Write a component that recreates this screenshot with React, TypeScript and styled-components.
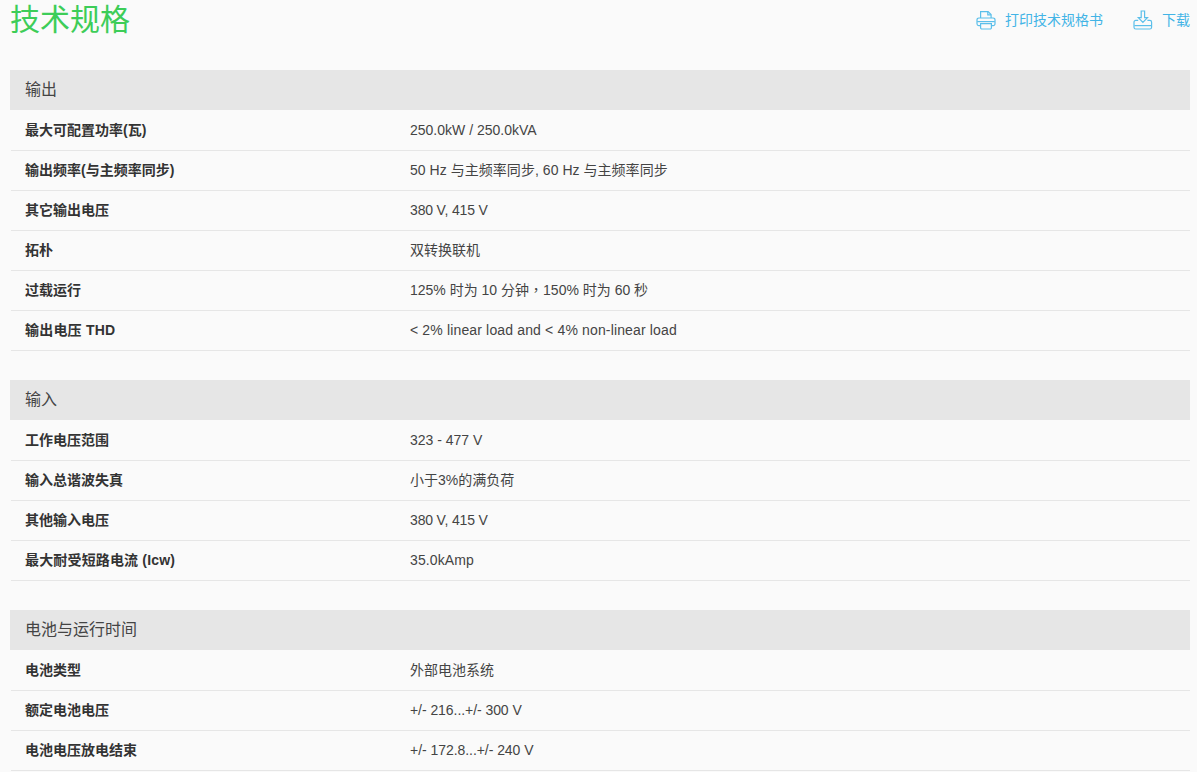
import React from "react";
import styled, { createGlobalStyle } from "styled-components";

const FONT = `"Liberation Sans", "Noto Sans CJK SC", Arial, sans-serif`;

const Global = createGlobalStyle`
  html, body { margin: 0; padding: 0; background: #fafafa; }
  body { font-family: ${FONT}; color: #333; overflow: hidden; }
`;

const Page = styled.div`
  width: 1197px;
  height: 772px;
  box-sizing: border-box;
  padding: 0 7px 0 10px;
  overflow: hidden;
`;

const Top = styled.header`
  display: flex;
  justify-content: space-between;
  align-items: flex-start;
  height: 70px;
`;

const Title = styled.h1`
  margin: 0;
  font-size: 30px;
  font-weight: 400;
  line-height: 40px;
  color: #3dcd58;
`;

const Actions = styled.div`
  display: flex;
  align-items: center;
  height: 40px;
  gap: 30px;
`;

const Action = styled.a`
  display: flex;
  align-items: center;
  gap: 9px;
  font-size: 14px;
  line-height: 20px;
  color: #42b4e6;
`;

const Section = styled.section`
  margin-bottom: 29px;
`;

const SectionHead = styled.h2`
  margin: 0;
  height: 40px;
  padding: 0 15px;
  background: #e6e6e6;
  font-size: 16px;
  font-weight: 400;
  line-height: 40px;
  color: #444;
`;

const Rows = styled.div`
  padding: 1px 0 0 1px;
`;

const Row = styled.div`
  display: grid;
  grid-template-columns: 385px 1fr;
  height: 40px;
  box-sizing: border-box;
  padding-left: 14px;
  border-bottom: 1px solid #e6e6e6;
  font-size: 14px;
  line-height: 38px;
`;

const Label = styled.div<{ $spacing?: number }>`
  font-weight: 700;
  color: #333;
  letter-spacing: ${(p) => p.$spacing ?? 0}px;
`;

const Value = styled.div<{ $spacing?: number }>`
  color: #444;
  letter-spacing: ${(p) => p.$spacing ?? 0}px;
`;

const CenteredComma = styled.span`
  font-family: "Noto Sans CJK TC", sans-serif;
  line-height: 0;
`;

const Svg = styled.svg`
  display: block;
  fill: none;
  stroke: #5bbfea;
  stroke-width: 1.2;
`;

const PrintIcon = () => (
  <Svg width="20" height="20" viewBox="0 0 20 20">
    <path d="M4.600 8V1.600h7.500l3 3V8" />
    <path d="M11.800 1.800v3h3.200" />
    <path d="M4.400 15.600H2.800a1.800 1.800 0 0 1-1.800-1.800V9.800A1.800 1.800 0 0 1 2.800 8h14.400a1.800 1.800 0 0 1 1.800 1.800v4a1.800 1.800 0 0 1-1.800 1.800h-1.600" />
    <path d="M1.200 11.600h17.600" />
    <path d="M4.600 13.600h10.800v4.200a1.200 1.200 0 0 1-1.200 1.200H5.800a1.200 1.200 0 0 1-1.200-1.200z" />
  </Svg>
);

const DownloadIcon = () => (
  <Svg width="20" height="20" viewBox="0 0 20 20">
    <path d="M8.200 1h3.400v6.600h2.900L9.900 12.400 5.300 7.600h2.900z" />
    <path d="M5.200 10.400H2.800A1.800 1.800 0 0 0 1 12.200v5A1.800 1.800 0 0 0 2.800 19h14a1.800 1.800 0 0 0 1.800-1.800v-5a1.800 1.800 0 0 0-1.800-1.800h-2.400" />
    <path d="M1.400 15.600h16.800" />
  </Svg>
);

type Spec = { k: string; v: React.ReactNode; ks?: number; vs?: number };

const sections: { title: string; rows: Spec[] }[] = [
  {
    title: "输出",
    rows: [
      { k: "最大可配置功率(瓦)", v: "250.0kW / 250.0kVA" },
      { k: "输出频率(与主频率同步)", v: "50 Hz 与主频率同步, 60 Hz 与主频率同步", vs: 0.04 },
      { k: "其它输出电压", v: "380 V, 415 V", vs: -0.16 },
      { k: "拓朴", v: "双转换联机" },
      { k: "过载运行", v: <>125% 时为 10 分钟<CenteredComma>，</CenteredComma>150% 时为 60 秒</> },
      { k: "输出电压 THD", v: "< 2% linear load and < 4% non-linear load", ks: 0.2, vs: 0.15 },
    ],
  },
  {
    title: "输入",
    rows: [
      { k: "工作电压范围", v: "323 - 477 V" },
      { k: "输入总谐波失真", v: "小于3%的满负荷" },
      { k: "其他输入电压", v: "380 V, 415 V", vs: -0.16 },
      { k: "最大耐受短路电流 (Icw)", v: "35.0kAmp", ks: 0.16, vs: 0.1 },
    ],
  },
  {
    title: "电池与运行时间",
    rows: [
      { k: "电池类型", v: "外部电池系统" },
      { k: "额定电池电压", v: "+/- 216...+/- 300 V", vs: -0.06 },
      { k: "电池电压放电结束", v: "+/- 172.8...+/- 240 V", vs: -0.05 },
    ],
  },
];

export default function App() {
  return (
    <Page>
      <Global />
      <Top>
        <Title>技术规格</Title>
        <Actions>
          <Action><PrintIcon />打印技术规格书</Action>
          <Action><DownloadIcon />下载</Action>
        </Actions>
      </Top>
      {sections.map((s) => (
        <Section key={s.title}>
          <SectionHead>{s.title}</SectionHead>
          <Rows>
            {s.rows.map((r) => (
              <Row key={r.k}>
                <Label $spacing={r.ks}>{r.k}</Label>
                <Value $spacing={r.vs}>{r.v}</Value>
              </Row>
            ))}
          </Rows>
        </Section>
      ))}
    </Page>
  );
}
